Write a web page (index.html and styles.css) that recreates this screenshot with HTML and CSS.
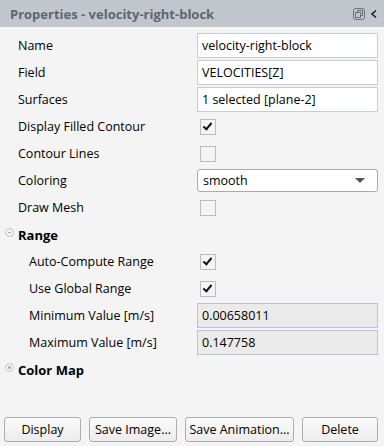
FILE: index.html
```html
<!DOCTYPE html>
<html lang="en">
<head>
    <meta charset="UTF-8">
    <title>Properties - velocity-right-block</title>
    <link rel="stylesheet" href="styles.css">
</head>
<body>
    <div class="panel">
        <div class="titlebar">
            <span class="title">Properties - velocity-right-block</span>
            <span class="title-icons">
                <svg class="ico-float" width="12" height="12" viewBox="0 0 12 12">
                    <rect x="0.5" y="0.5" width="11" height="11" rx="2" fill="none" stroke="#6b7178"/>
                    <rect x="4.5" y="2.5" width="5" height="5" fill="none" stroke="#6b7178"/>
                    <rect x="2.5" y="4.5" width="5" height="5" fill="#c3c8ce" stroke="#6b7178"/>
                </svg>
                <svg class="ico-collapse" width="8" height="10" viewBox="0 0 8 10">
                    <path d="M6 1.5 L2 5 L6 8.5" fill="none" stroke="#222" stroke-width="1.6"/>
                </svg>
            </span>
        </div>

        <div class="props">
            <div class="row">
                <label>Name</label>
                <input class="field" type="text" value="velocity-right-block">
            </div>
            <div class="row">
                <label>Field</label>
                <input class="field" type="text" value="VELOCITIES[Z]">
            </div>
            <div class="row">
                <label>Surfaces</label>
                <input class="field" type="text" value="1 selected [plane-2]">
            </div>
            <div class="row">
                <label>Display Filled Contour</label>
                <span class="check on"></span>
            </div>
            <div class="row">
                <label>Contour Lines</label>
                <span class="check"></span>
            </div>
            <div class="row">
                <label>Coloring</label>
                <div class="select"><span>smooth</span><span class="arrow"></span></div>
            </div>
            <div class="row">
                <label>Draw Mesh</label>
                <span class="check"></span>
            </div>

            <div class="group">
                <span class="toggle minus"></span>
                <span>Range</span>
            </div>
            <div class="row sub">
                <label>Auto-Compute Range</label>
                <span class="check on"></span>
            </div>
            <div class="row sub">
                <label>Use Global Range</label>
                <span class="check on"></span>
            </div>
            <div class="row sub">
                <label>Minimum Value [m/s]</label>
                <input class="field readonly" type="text" value="0.00658011" readonly>
            </div>
            <div class="row sub">
                <label>Maximum Value [m/s]</label>
                <input class="field readonly" type="text" value="0.147758" readonly>
            </div>

            <div class="group">
                <span class="toggle dot"></span>
                <span>Color Map</span>
            </div>
        </div>

        <div class="actions">
            <button class="btn-display">Display</button>
            <button class="btn-image">Save Image...</button>
            <button class="btn-anim">Save Animation...</button>
            <button class="btn-delete">Delete</button>
        </div>
    </div>
</body>
</html>
```

FILE: styles.css
```css
body {
    margin: 0;
    font-family: "Open Sans", "Noto Sans", sans-serif;
    font-size: 12.5px;
    color: #000;
    background-color: #f4f4f4;
}

.panel {
    width: 384px;
    height: 446px;
    display: flex;
    flex-direction: column;
    background-color: #f4f4f4;
}

.titlebar {
    height: 27px;
    background-color: #c1c7cd;
    display: flex;
    align-items: center;
    justify-content: space-between;
    padding: 0 6px 0 10px;
}

.title {
    font-weight: bold;
    font-size: 13px;
    color: #5d6670;
}

.title-icons {
    display: flex;
    align-items: center;
    gap: 5px;
}

.props {
    padding-top: 5px;
    flex: 1;
}

.row {
    height: 27px;
    display: grid;
    grid-template-columns: 197px 181px;
    align-items: center;
}

.row label {
    padding-left: 18px;
}

.row.sub label {
    padding-left: 29px;
}

.field {
    height: 25px;
    box-sizing: border-box;
    border: 1px solid #c5ced8;
    background-color: #fff;
    font-family: inherit;
    font-size: 12.5px;
    padding: 0 4px;
    margin: 0;
    width: 100%;
    outline: none;
}

.field.readonly {
    background-color: #ebebeb;
    border-color: #b8c4d1;
}

.check {
    width: 16px;
    height: 16px;
    margin-left: 3px;
    border: 1px solid #bcbcbc;
    background-color: #f4f4f4;
    box-sizing: border-box;
    position: relative;
}

.check.on::after {
    content: "";
    position: absolute;
    left: 4px;
    top: 1px;
    width: 3px;
    height: 7px;
    border: solid #111;
    border-width: 0 2.5px 2.5px 0;
    transform: rotate(40deg);
}

.select {
    height: 23px;
    box-sizing: border-box;
    border: 1px solid #aaaaaa;
    border-radius: 3px;
    background-color: #fff;
    display: flex;
    align-items: center;
    justify-content: space-between;
    padding: 0 12px 0 5px;
}

.arrow {
    width: 0;
    height: 0;
    border-left: 5px solid transparent;
    border-right: 5px solid transparent;
    border-top: 5px solid #555;
}

.group {
    height: 27px;
    display: flex;
    align-items: center;
    gap: 4px;
    padding-left: 5px;
    font-weight: bold;
    font-size: 13px;
}

.toggle {
    width: 7px;
    height: 7px;
    border: 1px solid #c4c4c4;
    border-radius: 50%;
    position: relative;
    margin-top: -4px;
}

.toggle.minus::after {
    content: "";
    position: absolute;
    left: 2px;
    top: 3px;
    width: 3px;
    height: 1px;
    background-color: #aaa;
}

.toggle.dot::after {
    content: "";
    position: absolute;
    left: 2px;
    top: 2px;
    width: 3px;
    height: 3px;
    border-radius: 50%;
    background-color: #aaa;
}

.actions {
    display: flex;
    gap: 8px;
    padding: 0 6px 4px 4px;
}

.actions button {
    height: 25px;
    border: 1px solid #adadad;
    border-radius: 3px;
    background: linear-gradient(#fbfbfb, #ececec);
    font-family: inherit;
    font-size: 12.5px;
    color: #000;
    padding: 0;
}

.btn-display {
    width: 77px;
}

.btn-image {
    width: 88px;
}

.btn-anim {
    width: 109px;
}

.btn-delete {
    width: 76px;
}
```
